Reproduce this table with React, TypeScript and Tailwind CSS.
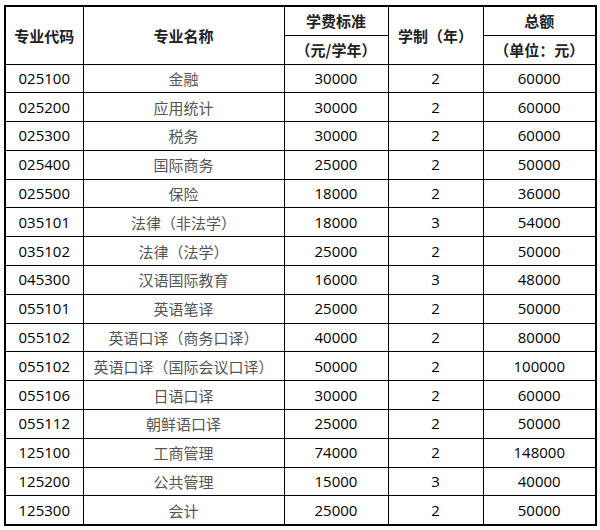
const rows: [string, string, string, string, string][] = [
  ["025100", "金融", "30000", "2", "60000"],
  ["025200", "应用统计", "30000", "2", "60000"],
  ["025300", "税务", "30000", "2", "60000"],
  ["025400", "国际商务", "25000", "2", "50000"],
  ["025500", "保险", "18000", "2", "36000"],
  ["035101", "法律（非法学）", "18000", "3", "54000"],
  ["035102", "法律（法学）", "25000", "2", "50000"],
  ["045300", "汉语国际教育", "16000", "3", "48000"],
  ["055101", "英语笔译", "25000", "2", "50000"],
  ["055102", "英语口译（商务口译）", "40000", "2", "80000"],
  ["055102", "英语口译（国际会议口译）", "50000", "2", "100000"],
  ["055106", "日语口译", "30000", "2", "60000"],
  ["055112", "朝鲜语口译", "25000", "2", "50000"],
  ["125100", "工商管理", "74000", "2", "148000"],
  ["125200", "公共管理", "15000", "3", "40000"],
  ["125300", "会计", "25000", "2", "50000"],
];

const num = "font-['Open_Sans','Noto_Sans_CJK_SC',sans-serif] text-[15px] text-black";
const cjk = "font-['Noto_Sans_CJK_SC',sans-serif] text-[15px] text-[#555]";
const head = "font-['Noto_Sans_CJK_SC',sans-serif] text-[15px] font-bold text-[#222]";
const cell = "border-[1.5px] border-black text-center align-middle p-0 leading-none";

export default function App() {
  return (
    <div className="w-[600px] h-[530px] bg-white pt-[5px] pl-[4px]">
      <table className="table-fixed border-collapse border-2 border-black w-[591px]">
        <colgroup>
          <col className="w-[78px]" />
          <col className="w-[201px]" />
          <col className="w-[104px]" />
          <col className="w-[95px]" />
          <col className="w-[113px]" />
        </colgroup>
        <thead>
          <tr className="h-[29px]">
            <th rowSpan={2} className={`${cell} ${head}`}>专业代码</th>
            <th rowSpan={2} className={`${cell} ${head}`}>专业名称</th>
            <th className={`${cell} ${head}`}>学费标准</th>
            <th rowSpan={2} className={`${cell} ${head}`}>学制（年）</th>
            <th className={`${cell} ${head}`}>总额</th>
          </tr>
          <tr className="h-[29px]">
            <th className={`${cell} ${head}`}>（元/学年）</th>
            <th className={`${cell} ${head}`}>（单位：元）</th>
          </tr>
        </thead>
        <tbody>
          {rows.map((r, i) => (
            <tr key={i} className="h-[28.8px]">
              <td className={`${cell} ${num}`}>{r[0]}</td>
              <td className={`${cell} ${cjk}`}>{r[1]}</td>
              <td className={`${cell} ${num}`}>{r[2]}</td>
              <td className={`${cell} ${num}`}>{r[3]}</td>
              <td className={`${cell} ${num}`}>{r[4]}</td>
            </tr>
          ))}
        </tbody>
      </table>
    </div>
  );
}
